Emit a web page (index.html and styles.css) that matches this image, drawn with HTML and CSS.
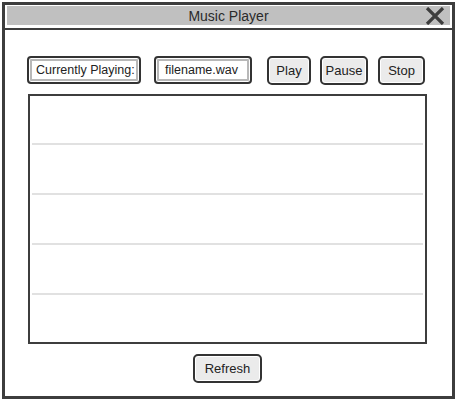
FILE: index.html
```html
<!DOCTYPE html>
<html>
<head>
<meta charset="utf-8">
<link rel="stylesheet" href="styles.css">
</head>
<body>
<div class="window">
  <div class="titlebar">
    <span class="title">Music Player</span>
    <svg class="close" width="20" height="18" viewBox="0 0 20 18"><path d="M2 1 L18 17 M18 1 L2 17" stroke="#3d3d3d" stroke-width="3.2" fill="none"/></svg>
  </div>
  <div class="content">
    <div class="toolbar">
      <div class="field label">Currently Playing:</div>
      <div class="field file">filename.wav</div>
      <div class="buttons">
        <div class="btn play">Play</div>
        <div class="btn pause">Pause</div>
        <div class="btn stop">Stop</div>
      </div>
    </div>
    <div class="list">
      <div class="row first"></div>
      <div class="row"></div>
      <div class="row"></div>
      <div class="row"></div>
      <div class="row last"></div>
    </div>
    <div class="footer">
      <div class="btn refresh">Refresh</div>
    </div>
  </div>
</div>
</body>
</html>
```
FILE: styles.css
```css
* { box-sizing: border-box; }
html, body { margin: 0; padding: 0; background: #fff; }
body { font-family: "Liberation Sans", Arial, sans-serif; color: #333; }
.window {
  margin: 2px 0 0 2px;
  width: 453px;
  height: 397px;
  border: 3px solid #3d3d3d;
  display: flex;
  flex-direction: column;
}
.titlebar {
  position: relative;
  margin: 1px 2px 0 2px;
  height: 19px;
  background: #c0c0c0;
  display: flex;
  align-items: center;
  justify-content: center;
  font-size: 14px;
  color: #2a2a2a;
}
.close { position: absolute; right: 5px; top: 1px; }
.content {
  flex: 1;
  margin-top: 3px;
  border-top: 2px solid #3d3d3d;
  padding: 26px 0 0 22px;
}
.toolbar { display: flex; align-items: flex-start; height: 29px; }
.field {
  height: 28px;
  border: 2px solid #333;
  border-radius: 4px;
  box-shadow: inset 0 0 0 1px #fff, inset 0 0 0 3px #b8b8b8;
  display: flex;
  align-items: center;
  font-size: 12.5px;
  color: #222;
  background: #fff;
  white-space: nowrap;
  overflow: hidden;
}
.label { width: 114px; padding-left: 7px; }
.file { width: 98px; margin-left: 13px; padding-left: 9px; }
.buttons { display: flex; gap: 9px; margin-left: 15px; }
.btn {
  height: 29px;
  border: 2px solid #333;
  border-radius: 5px;
  box-shadow: inset 0 0 0 1px #fff;
  background: #ebebeb;
  display: flex;
  align-items: center;
  justify-content: center;
  font-size: 13px;
  color: #222;
}
.play { width: 44px; }
.pause { width: 48px; }
.stop { width: 47px; margin-left: 1px; }
.list {
  margin: 9px 0 0 1px;
  width: 399px;
  height: 250px;
  border: 2px solid #3d3d3d;
  padding: 0 2px;
}
.row { height: 50px; border-bottom: 2px solid #e1e1e1; }
.row.first { height: 49px; }
.row.last { border-bottom: none; }
.footer { display: flex; justify-content: center; width: 401px; margin-top: 10px; }
.refresh { width: 69px; font-size: 13px; }
```
